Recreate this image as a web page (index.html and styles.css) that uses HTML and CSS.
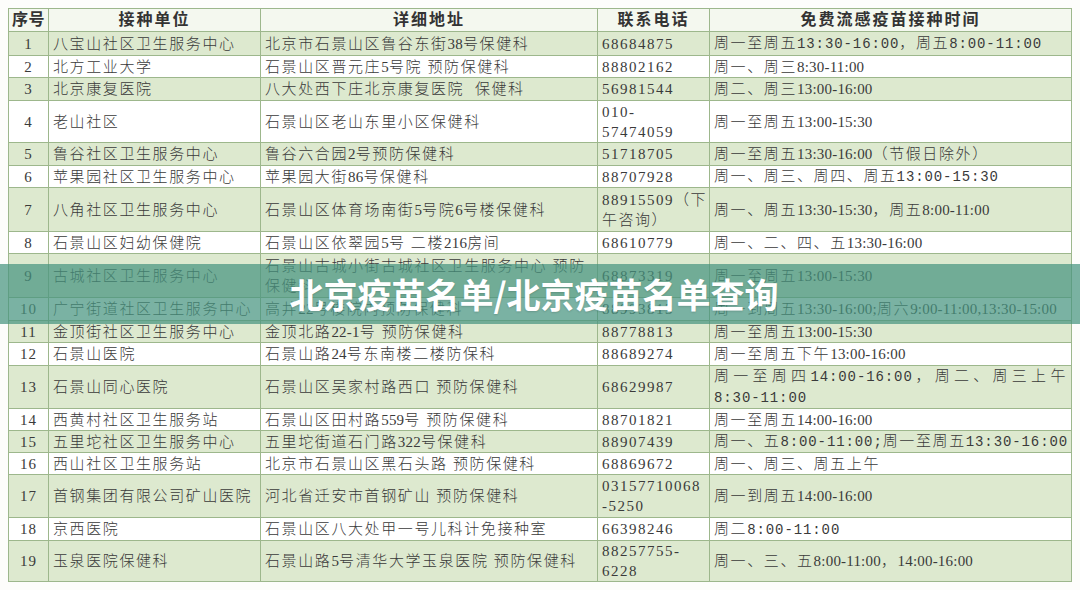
FILE: index.html
```html
<!DOCTYPE html>
<html lang="zh-CN">
<head>
<meta charset="utf-8">
<title>北京疫苗名单</title>
<link rel="stylesheet" href="styles.css">
</head>
<body>
<div class="page">
<table class="list">
<colgroup>
<col class="c-no"><col class="c-unit"><col class="c-addr"><col class="c-tel"><col class="c-time">
</colgroup>
<thead>
<tr class="h23"><th>序号</th><th>接种单位</th><th>详细地址</th><th>联系电话</th><th>免费流感疫苗接种时间</th></tr>
</thead>
<tbody>
<tr class="g h24"><td class="no">1</td><td>八宝山社区卫生服务中心</td><td>北京市石景山区鲁谷东街<span class="n">38</span>号保健科</td><td class="tel">68684875</td><td>周一至周五<span class="m">13:30-16:00</span>，周五<span class="m">8:00-11:00</span></td></tr>
<tr class="h22"><td class="no">2</td><td>北方工业大学</td><td>石景山区晋元庄<span class="n">5</span>号院 预防保健科</td><td class="tel">88802162</td><td>周一、周三<span class="n">8:30-11:00</span></td></tr>
<tr class="g h23"><td class="no">3</td><td>北京康复医院</td><td>八大处西下庄北京康复医院&nbsp; 保健科</td><td class="tel">56981544</td><td>周二、周三<span class="n">13:00-16:00</span></td></tr>
<tr class="h42"><td class="no">4</td><td>老山社区</td><td>石景山区老山东里小区保健科</td><td class="tel">010-<br>57474059</td><td>周一至周五<span class="n">13:00-15:30</span></td></tr>
<tr class="g h23"><td class="no">5</td><td>鲁谷社区卫生服务中心</td><td>鲁谷六合园<span class="n">2</span>号预防保健科</td><td class="tel">51718705</td><td>周一至周五<span class="n">13:30-16:00</span>（节假日除外）</td></tr>
<tr class="h22"><td class="no">6</td><td>苹果园社区卫生服务中心</td><td>苹果园大街<span class="n">86</span>号保健科</td><td class="tel">88707928</td><td>周一、周三、周四、周五<span class="m">13:00-15:30</span></td></tr>
<tr class="g h44"><td class="no">7</td><td>八角社区卫生服务中心</td><td>石景山区体育场南街<span class="n">5</span>号院<span class="n">6</span>号楼保健科</td><td class="tel"><span class="jl">88915509（下</span>午咨询）</td><td>周一、周五<span class="n">13:30-15:30</span>，周五<span class="n">8:00-11:00</span></td></tr>
<tr class="h22"><td class="no">8</td><td>石景山区妇幼保健院</td><td>石景山区依翠园<span class="n">5</span>号 二楼<span class="n">216</span>房间</td><td class="tel">68610779</td><td>周一、二、四、五<span class="n">13:30-16:00</span></td></tr>
<tr class="g h44"><td class="no">9</td><td>古城社区卫生服务中心</td><td>石景山古城小街古城社区卫生服务中心 预防<br>保健科</td><td class="tel">68873319</td><td>周一至周五<span class="n">13:00-15:30</span></td></tr>
<tr class="h23"><td class="no">10</td><td>广宁街道社区卫生服务中心</td><td>高井<span class="n">22</span>号楼院内预防保健科</td><td class="tel">88993813</td><td>周一到周五<span class="n">13:30-16:00;</span>周六<span class="n">9:00-11:00,13:30-15:00</span></td></tr>
<tr class="g h22"><td class="no">11</td><td>金顶街社区卫生服务中心</td><td>金顶北路<span class="n">22-1</span>号 预防保健科</td><td class="tel">88778813</td><td>周一至周五<span class="n">13:00-15:30</span></td></tr>
<tr class="h23"><td class="no">12</td><td>石景山医院</td><td>石景山路<span class="n">24</span>号东南楼二楼防保科</td><td class="tel">88689274</td><td>周一至周五下午<span class="n">13:00-16:00</span></td></tr>
<tr class="g h42"><td class="no">13</td><td>石景山同心医院</td><td>石景山区吴家村路西口 预防保健科</td><td class="tel">68629987</td><td><span class="jl">周一至周四<span class="m">14:00-16:00</span>，周二、周三上午</span><span class="m">8:30-11:00</span></td></tr>
<tr class="h22"><td class="no">14</td><td>西黄村社区卫生服务站</td><td>石景山区田村路<span class="n">559</span>号 预防保健科</td><td class="tel">88701821</td><td>周一至周五<span class="n">14:00-16:00</span></td></tr>
<tr class="g h22"><td class="no">15</td><td>五里坨社区卫生服务中心</td><td>五里坨街道石门路<span class="n">322</span>号保健科</td><td class="tel">88907439</td><td>周一、五<span class="m">8:00-11:00;</span>周一至周五<span class="m">13:30-16:00</span></td></tr>
<tr class="h22"><td class="no">16</td><td>西山社区卫生服务站</td><td>北京市石景山区黑石头路 预防保健科</td><td class="tel">68869672</td><td>周一、周三、周五上午</td></tr>
<tr class="g h43"><td class="no">17</td><td>首钢集团有限公司矿山医院</td><td>河北省迁安市首钢矿山 预防保健科</td><td class="tel">03157710068<br>-5250</td><td>周一到周五<span class="n">14:00-16:00</span></td></tr>
<tr class="h23"><td class="no">18</td><td>京西医院</td><td>石景山区八大处甲一号儿科计免接种室</td><td class="tel">66398246</td><td>周二<span class="m">8:00-11:00</span></td></tr>
<tr class="g h40"><td class="no">19</td><td>玉泉医院保健科</td><td>石景山路<span class="n">5</span>号清华大学玉泉医院 预防保健科</td><td class="tel">88257755-<br>6228</td><td>周一、三、五<span class="n">8:00-11:00</span>，<span class="n">14:00-16:00</span></td></tr>
</tbody>
</table>
<div class="banner"><h1 class="banner-title">北京疫苗名单/北京疫苗名单查询</h1></div>
</div>
</body>
</html>
```

FILE: styles.css
```css
html, body {
  margin: 0;
  padding: 0;
  background: #fdfdfb;
}

.page {
  position: relative;
  width: 1080px;
  height: 590px;
  padding: 8px 0 0 8px;
  box-sizing: border-box;
  overflow: hidden;
}

.list {
  width: 1063px;
  table-layout: fixed;
  border-collapse: collapse;
  font-family: "Liberation Serif", "Noto Sans CJK SC", serif;
  font-size: 15px;
  font-weight: 300;
  color: #3a3a3a;
  letter-spacing: 1.6px;
}

.c-no { width: 40px; }
.c-unit { width: 212px; }
.c-addr { width: 337px; }
.c-tel { width: 112px; }
.c-time { width: 362px; }

.list th,
.list td {
  border: 1px solid #9db78c;
  padding: 0 4px;
  line-height: 20px;
  vertical-align: middle;
  white-space: nowrap;
  text-align: left;
  overflow: hidden;
}

.list th {
  background: #f4f8ef;
  font-weight: 700;
  font-size: 16px;
  text-align: center;
  letter-spacing: 2px;
  color: #333;
}

.list th:first-child {
  padding: 0;
  letter-spacing: 0.5px;
}

.list tr.g td {
  background: #dde9cf;
}

.list td {
  background: #ffffff;
}

.list td.no {
  text-align: center;
  padding: 0;
  letter-spacing: 1px;
}

.list td.tel {
  letter-spacing: 1.5px;
}

.n {
  letter-spacing: 0.2px;
}

.m {
  font-family: "Liberation Mono", "Noto Sans CJK SC", monospace;
  font-size: 14px;
  letter-spacing: 0.9px;
}

.jl {
  display: block;
  text-align: justify;
  text-align-last: justify;
}

.h22 { height: 22px; }
.h23 { height: 23px; }
.h24 { height: 24px; }
.h40 { height: 40px; }
.h42 { height: 42px; }
.h43 { height: 43px; }
.h44 { height: 44px; }

.banner {
  position: absolute;
  left: 0;
  top: 264px;
  width: 1080px;
  height: 60px;
  background: rgba(70, 148, 128, 0.72);
  display: flex;
  align-items: center;
  justify-content: center;
}

.banner-title {
  margin: 0 12px 0 0;
  font-family: "Noto Sans CJK SC", "Noto Sans", sans-serif;
  font-size: 34px;
  font-weight: 700;
  color: #ffffff;
  letter-spacing: 0;
  line-height: 1;
  text-shadow: 0 1px 2px rgba(0, 0, 0, 0.15);
}
```
